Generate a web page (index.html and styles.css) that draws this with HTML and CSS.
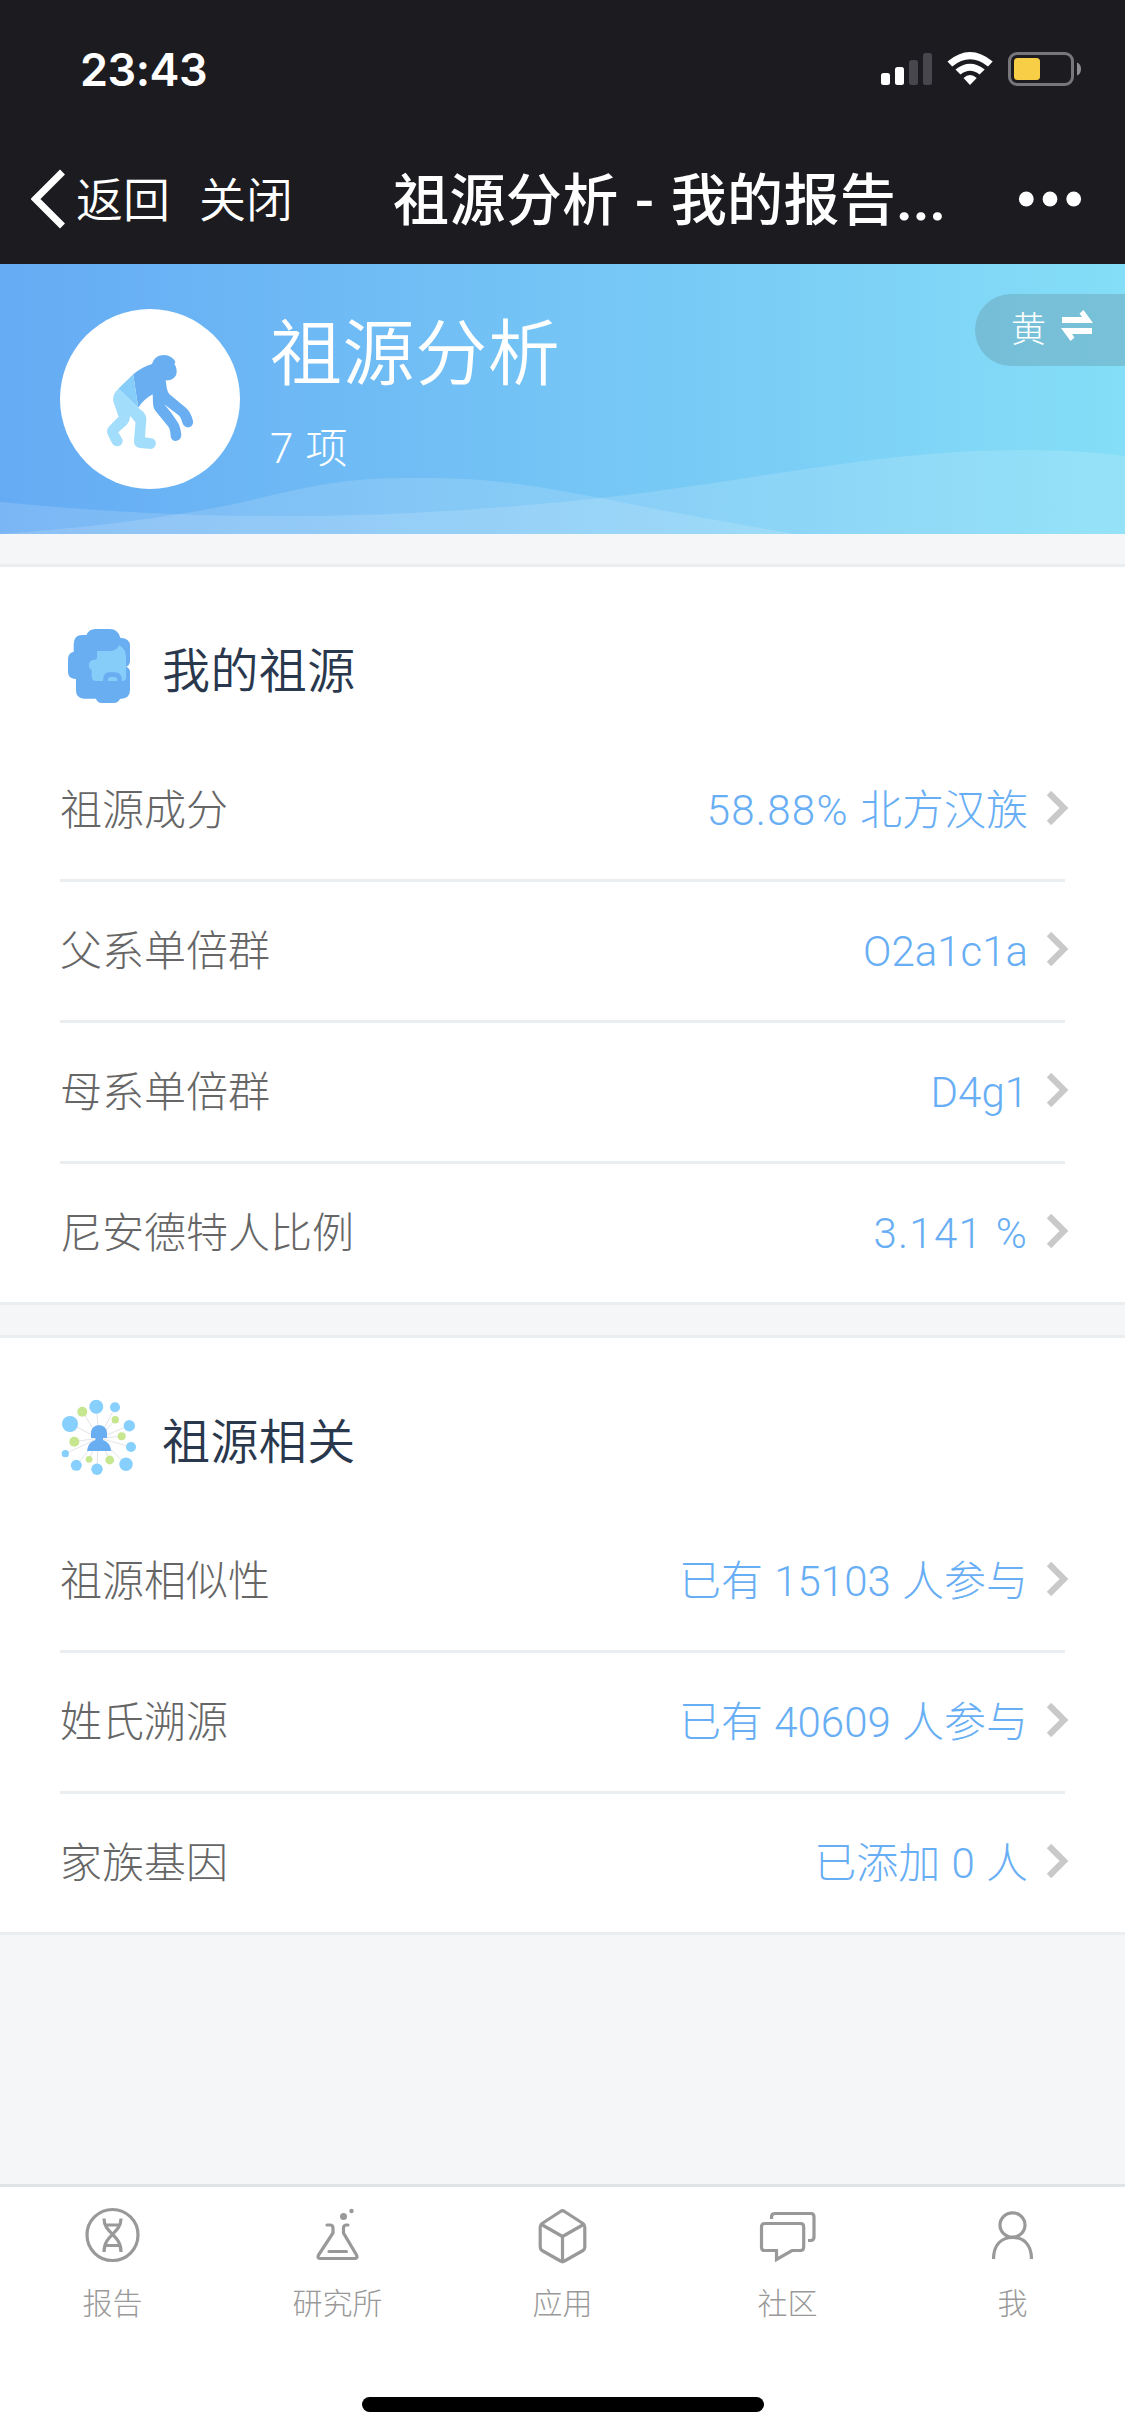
FILE: index.html
```html
<!DOCTYPE html>
<html lang="zh-CN">
<head>
    <meta charset="UTF-8">
    <meta name="viewport" content="width=device-width, initial-scale=1.0">
    <title>祖源分析 - 我的报告</title>
    <link rel="stylesheet" href="styles.css">
</head>
<body>

    <header class="app-header">
        <div class="status-bar">
            <span class="clock">23:43</span>
            <svg class="status-icons" viewBox="0 0 202 36">
                <rect x="1" y="22" width="9" height="12" rx="2.5" fill="#fff"/>
                <rect x="15" y="16" width="9" height="18" rx="2.5" fill="#fff"/>
                <rect x="29" y="9" width="9" height="25" rx="2.5" fill="#48474d"/>
                <rect x="43" y="2" width="9" height="32" rx="2.5" fill="#48474d"/>
                <path d="M67.500 10.500Q90 -8.500 112.700 10.500L108 15.500Q90 1 72.200 15.500Z" fill="#fff"/>
                <path d="M75.500 18.500Q90 7 104.700 18.500L99.500 23.500Q90 16 80.500 23.500Z" fill="#fff"/>
                <path d="M83.500 27Q90 21 96.700 27L90 34Z" fill="#fff"/>
                <rect x="129.500" y="2.500" width="63" height="31" rx="7.500" fill="none" stroke="#77777b" stroke-width="3"/>
                <rect x="134" y="7" width="26" height="22" rx="3.500" fill="#f7ce46"/>
                <path d="M197 11.500Q201 13 201 18T197 24.500Z" fill="#8e8e92"/>
            </svg>
        </div>
        <nav class="nav-bar">
            <svg class="back-icon" viewBox="0 0 36 60">
                <path d="M31.500 3L4.500 30L31.500 57" fill="none" stroke="#fff" stroke-width="7"/>
            </svg>
            <a class="nav-link">返回</a>
            <a class="nav-link nav-close">关闭</a>
            <h1 class="nav-title">祖源分析 - 我的报告<span class="dots">...</span></h1>
            <svg class="more-icon" viewBox="0 0 64 16">
                <circle cx="8.300" cy="8" r="7.400"/>
                <circle cx="32" cy="8" r="7.400"/>
                <circle cx="55.700" cy="8" r="7.400"/>
            </svg>
        </nav>
    </header>

    <section class="banner">
        <svg class="waves" viewBox="0 0 1125 270" preserveAspectRatio="none">
            <path d="M0 238C200 257 375 258 600 234C760 216 880 186 1020 186C1060 186 1095 188 1125 192V270H0Z"/>
            <path d="M0 270C110 262 200 249 260 234C340 214 375 214 423 214C500 214 545 224 600 234C670 248 720 257 795 270Z"/>
        </svg>
        <div class="avatar">
            <svg viewBox="0 0 180 180">
                <path fill="#6aaef2" d="M73.200 65.300Q82 58 92 55C94 49 98 46 104.200 46C109 46 113.500 49 115.300 52.700L114.500 55.300C116.500 58 117.300 62 116.200 66C114 70 110 72 105.700 71.300L106.800 79.300Q107.500 83 109.500 85.300L125.500 98.500Q131 103 133 112C134 119 125 121 122.500 114.300Q121 108 118.300 106L104.200 95.300Q112 104 117.500 113Q120.500 117 121.300 126C121 133 112 134 110.700 127.700Q110.500 121 108.400 117.700L96 102.500Q93 99 93 94L92.700 85.300Q84 90 78.200 98.700Z"/>
                <path fill="#87cdfa" d="M73.200 65.300L58.300 79.700L78.200 98.700Z"/>
                <path fill="#a3ddfc" d="M58.300 79.700Q52 86 53.200 92L58.600 107.700L49.500 117Q46 120 47.500 125L52.100 134.300C55 140 64 137 62.500 130.500L58.300 123.300L67 115.500Q70 112 70.100 107L75.500 113.300L73.900 132Q74 138 80 139L91.200 140C97.500 139 97.500 130 91.200 129.300L85 128.300L86.400 109.300Q86 106 83.500 103L78.200 98.700Z"/>
            </svg>
        </div>
        <div class="banner-text">
            <h2>祖源分析</h2>
            <p>7 项</p>
        </div>
        <div class="switch-pill">
            <span>黄</span>
            <svg viewBox="0 0 34 32">
                <path d="M2 7H22L19.500 3.500L23.500 0L33 13H2Z"/>
                <path d="M32 18H1L10.500 31L14.500 27.500L12 24H32Z"/>
            </svg>
        </div>
    </section>

    <main class="content">
        <section class="card">
            <div class="card-head">
                <svg class="card-icon" viewBox="0 0 80 80">
                    <path fill="#6aaef2" d="M35 3H50Q58 3 60.300 11.700Q70 12 70 20V36Q69 40 66 40.700Q70 42 70 46V64Q70 72.700 60 73Q58 77 54 77H42Q37.500 77 36 72.700H24Q16 72 16 64.700V53Q8 53 8 46V33Q8 27 13.700 25.700V18Q14 9 22 9H26.300Q29 3 35 3Z"/>
                    <path fill="#87cdfa" d="M37 25H50Q57 24.500 59.300 19.300Q66 23 66 31V52Q66 55 62 55Q62 46.300 55 46.300H49Q43 46.300 43 55H36Q31.700 55 31.700 50V44C27.500 42 28 34.500 33.500 34Q37 34 37 31Z"/>
                    <path fill="#87cdfa" d="M47.700 55Q47.500 51 51 51H54.500Q57.500 51 57.500 55Z"/>
                </svg>
                <h3>我的祖源</h3>
            </div>
            <ul class="list">
                <li>
                    <span class="label">祖源成分</span>
                    <span class="value"><span class="percent">58.88%</span> 北方汉族</span>
                    <svg class="arrow" viewBox="0 0 22 34"><path d="M2 2L17 17L2 32"/></svg>
                </li>
                <li>
                    <span class="label">父系单倍群</span>
                    <span class="value">O2a1c1a</span>
                    <svg class="arrow" viewBox="0 0 22 34"><path d="M2 2L17 17L2 32"/></svg>
                </li>
                <li>
                    <span class="label">母系单倍群</span>
                    <span class="value">D4g1</span>
                    <svg class="arrow" viewBox="0 0 22 34"><path d="M2 2L17 17L2 32"/></svg>
                </li>
                <li>
                    <span class="label">尼安德特人比例</span>
                    <span class="value percent">3.141 %</span>
                    <svg class="arrow" viewBox="0 0 22 34"><path d="M2 2L17 17L2 32"/></svg>
                </li>
            </ul>
        </section>

        <section class="card">
            <div class="card-head">
                <svg class="card-icon" viewBox="0 0 80 80">
                    <g stroke="#e3e5e8" stroke-width="1">
                        <path d="M39 41L36.300 9.700M39 41L55 10.300M39 41L69.300 28.700M39 41L71 50M39 41L66 67.300M38 41L37 72.300M39 41L16.300 68.300M39 41L5.300 56.700M39 41L10 27M39 41L22.300 14.700M39 41L55.300 22.700M39 41L61.700 39.300M39 41L49.700 63M39 41L29 62.300M39 41L14.300 44.700"/>
                    </g>
                    <g fill="#87cffc">
                        <circle cx="36.300" cy="9.700" r="7"/>
                        <circle cx="55" cy="10.300" r="5"/>
                        <circle cx="69.300" cy="28.700" r="5.700"/>
                        <circle cx="71" cy="50" r="5"/>
                        <circle cx="66" cy="67.300" r="6.700"/>
                        <circle cx="37" cy="72.300" r="5.700"/>
                        <circle cx="16.300" cy="68.300" r="5.500"/>
                        <circle cx="5.300" cy="56.700" r="3.600"/>
                        <circle cx="10" cy="27" r="8"/>
                    </g>
                    <g fill="#c6e78f">
                        <circle cx="22.300" cy="14.700" r="5"/>
                        <circle cx="55.300" cy="22.700" r="3.700"/>
                        <circle cx="61.700" cy="39.300" r="4"/>
                        <circle cx="49.700" cy="63" r="4.400"/>
                        <circle cx="29" cy="62.300" r="3.400"/>
                        <circle cx="14.300" cy="44.700" r="5"/>
                    </g>
                    <path fill="#6aaef2" d="M31 41V36C31 25.500 47 25.500 47 36V41H43V43Q50 45 51.300 54H27Q28 45 35.500 43V41Z"/>
                </svg>
                <h3>祖源相关</h3>
            </div>
            <ul class="list">
                <li>
                    <span class="label">祖源相似性</span>
                    <span class="value">已有 15103 人参与</span>
                    <svg class="arrow" viewBox="0 0 22 34"><path d="M2 2L17 17L2 32"/></svg>
                </li>
                <li>
                    <span class="label">姓氏溯源</span>
                    <span class="value">已有 40609 人参与</span>
                    <svg class="arrow" viewBox="0 0 22 34"><path d="M2 2L17 17L2 32"/></svg>
                </li>
                <li>
                    <span class="label">家族基因</span>
                    <span class="value">已添加 0 人</span>
                    <svg class="arrow" viewBox="0 0 22 34"><path d="M2 2L17 17L2 32"/></svg>
                </li>
            </ul>
        </section>
    </main>

    <footer class="tab-bar">
        <nav class="tabs">
            <a class="tab">
                <svg viewBox="0 0 60 60">
                    <circle cx="29.500" cy="30" r="25.500"/>
                    <path d="M21 13.500C21 29 38 29 38 47M38 13.500C38 29 21 29 21 47M23 20H36M23 40.500H36"/>
                </svg>
                <span>报告</span>
            </a>
            <a class="tab">
                <svg viewBox="0 0 60 60">
                    <path stroke-linecap="round" d="M19 20H22Q25 20 25 23V28L10.500 50Q9 53.500 12.500 53.500H46.500Q50 53.500 48.500 50L35.500 28V23Q35.500 20 38.500 20H40M21 46.500H38.500"/>
                    <circle class="solid" cx="35.500" cy="11.500" r="3.500"/>
                    <circle class="solid" cx="43.500" cy="6" r="2.200"/>
                </svg>
                <span>研究所</span>
            </a>
            <a class="tab">
                <svg viewBox="0 0 60 60">
                    <path stroke-linejoin="round" d="M27.500 6.500Q29.500 5 31.500 6.500L50 18.500Q51.800 20 51.800 22V42Q51.800 44 50 45.500L31.500 56Q29.500 57.500 27.500 56L9 45.500Q7.200 44 7.200 42V22Q7.200 20 9 18.500ZM8.500 19.500L29.500 31.500L50.500 19.500M29.500 31.500V56"/>
                </svg>
                <span>应用</span>
            </a>
            <a class="tab">
                <svg viewBox="0 0 60 60">
                    <path d="M6.500 18.500H42.500Q45.700 18.500 45.700 22V42Q45.700 45.500 42.500 45.500H34L18.500 54.500V45.500H6.500Q3.500 45.500 3.500 42V22Q3.500 18.500 6.500 18.500ZM13.500 14V12Q13.500 8.500 17 8.500H53Q56 8.500 56 12V32Q56 35.500 52.500 35.500H50"/>
                </svg>
                <span>社区</span>
            </a>
            <a class="tab">
                <svg viewBox="0 0 60 60">
                    <ellipse cx="29.500" cy="20" rx="12.500" ry="12.200"/>
                    <path d="M10.500 54C10.500 40 18 32.500 29.500 32.500S48.500 40 48.500 54"/>
                </svg>
                <span>我</span>
            </a>
        </nav>
        <div class="home-indicator"></div>
    </footer>

</body>
</html>
```
FILE: styles.css
```css
* {
    box-sizing: border-box;
    margin: 0;
    padding: 0;
}

body {
    display: flex;
    flex-direction: column;
    height: 2436px;
    background-color: #f5f6f8;
    font-family: Roboto, "Noto Sans CJK SC", sans-serif;
    font-weight: 300;
    color: #666;
}

svg {
    display: block;
    flex: none;
}

/* Header */
.app-header {
    height: 264px;
    background-color: #1c1b20;
    color: #fff;
}

.status-bar {
    display: flex;
    justify-content: space-between;
    align-items: center;
    height: 138px;
    padding: 0 43px 0 80px;
}

.clock {
    font-family: Inter, sans-serif;
    font-size: 45px;
    font-weight: 600;
    letter-spacing: -0.5px;
}

.status-icons {
    width: 202px;
    height: 36px;
}

.nav-bar {
    display: flex;
    align-items: center;
    height: 122px;
    padding: 0 43px 0 31px;
}

.back-icon {
    width: 36px;
    height: 60px;
    margin-right: 9px;
}

.nav-link {
    padding-top: 4px;
    font-size: 47px;
    font-weight: 350;
    line-height: 60px;
}

.nav-close {
    margin-left: 29px;
}

.nav-title {
    margin-left: 100px;
    padding-top: 3px;
    font-size: 56px;
    font-weight: 500;
    line-height: 70px;
    letter-spacing: 0.4px;
    word-spacing: 2px;
    white-space: nowrap;
}

.dots {
    font-weight: 700;
}

.more-icon {
    width: 64px;
    height: 16px;
    margin-left: auto;
    fill: #fff;
}

/* Banner */
.banner {
    position: relative;
    display: flex;
    height: 270px;
    padding: 45px 60px;
    background: linear-gradient(90deg, #65abf4, #84def7);
    color: #fff;
}

.waves {
    position: absolute;
    left: 0;
    top: 0;
    width: 100%;
    height: 100%;
    fill: rgba(255, 255, 255, 0.14);
}

.avatar {
    position: relative;
    width: 180px;
    height: 180px;
    border-radius: 50%;
    background-color: #fff;
}

.banner-text {
    position: relative;
    margin-left: 30px;
    padding-top: 3px;
}

.banner-text h2 {
    font-size: 72px;
    font-weight: 350;
    line-height: 86px;
    letter-spacing: 0.6px;
}

.banner-text p {
    margin-top: 21px;
    font-size: 42px;
    line-height: 60px;
    word-spacing: 2px;
}

.switch-pill {
    position: absolute;
    top: 30px;
    right: 0;
    display: flex;
    align-items: center;
    width: 150px;
    height: 72px;
    padding-left: 36px;
    border-radius: 36px 0 0 36px;
    background-color: rgba(102, 153, 170, 0.4);
    font-size: 35px;
    line-height: 72px;
}

.switch-pill span {
    padding-top: 2px;
}

.switch-pill svg {
    width: 34px;
    height: 32px;
    margin: -8px 0 0 14px;
    fill: #fff;
}

/* Cards */
.content {
    flex: 1;
    padding-top: 30px;
}

.card {
    margin-bottom: 30px;
    border-top: 3px solid #ebeef1;
    border-bottom: 3px solid #ebeef1;
    background-color: #fff;
}

.card-head {
    display: flex;
    align-items: center;
    height: 174px;
    padding: 24px 60px 0;
}

.card-icon {
    width: 80px;
    height: 80px;
    margin-top: -1px;
}

.card-head h3 {
    margin-left: 22px;
    padding-top: 2px;
    font-size: 48px;
    font-weight: 350;
    letter-spacing: 0.4px;
    color: #2a384d;
}

.list {
    padding: 0 60px;
    list-style: none;
}

.list li {
    display: flex;
    align-items: baseline;
    height: 141px;
    padding-top: 40px;
    border-bottom: 3px solid #ebeef1;
    font-size: 42px;
    line-height: 60px;
}

.list li:last-child {
    height: 138px;
    border-bottom: none;
}

.value {
    margin-left: auto;
    color: #68aef4;
    word-spacing: 1px;
}

.percent {
    letter-spacing: 1.3px;
}

.arrow {
    align-self: flex-start;
    width: 22px;
    height: 34px;
    margin: 10px -4px 0 19px;
    fill: none;
    stroke: #c9c9c9;
    stroke-width: 6.2;
}

/* Bottom tabs */
.tab-bar {
    height: 252px;
    border-top: 3px solid #e0e4e7;
    background-color: #fff;
}

.tabs {
    display: flex;
}

.tab {
    display: flex;
    flex: 1;
    flex-direction: column;
    align-items: center;
    height: 210px;
    padding-top: 18px;
    font-size: 30px;
    line-height: 40px;
    color: #999;
}

.tab svg {
    width: 60px;
    height: 60px;
    margin-bottom: 19px;
    fill: none;
    stroke: #999;
    stroke-width: 3.2;
}

.tab .solid {
    fill: #999;
    stroke: none;
}

.home-indicator {
    width: 402px;
    height: 15px;
    margin: 0 auto;
    border-radius: 8px;
    background-color: #000;
}
```
